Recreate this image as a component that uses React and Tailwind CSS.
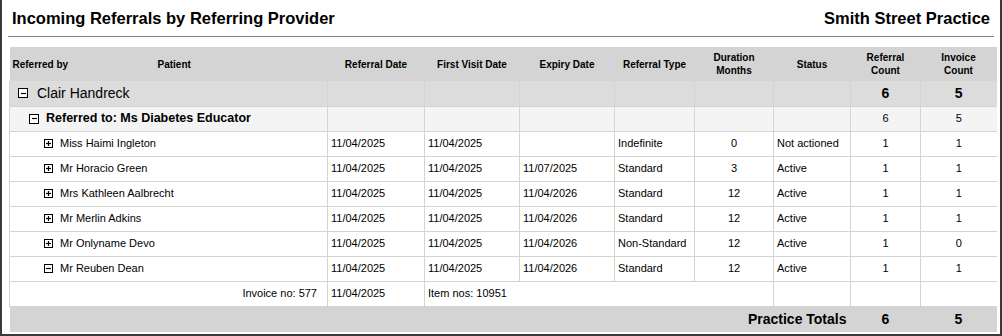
import React from "react";

const patients = [
  { name: "Miss Haimi Ingleton", ref: "11/04/2025", first: "11/04/2025", expiry: "", type: "Indefinite", dur: "0", status: "Not actioned", rc: "1", ic: "1" },
  { name: "Mr Horacio Green", ref: "11/04/2025", first: "11/04/2025", expiry: "11/07/2025", type: "Standard", dur: "3", status: "Active", rc: "1", ic: "1" },
  { name: "Mrs Kathleen Aalbrecht", ref: "11/04/2025", first: "11/04/2025", expiry: "11/04/2026", type: "Standard", dur: "12", status: "Active", rc: "1", ic: "1" },
  { name: "Mr Merlin Adkins", ref: "11/04/2025", first: "11/04/2025", expiry: "11/04/2026", type: "Standard", dur: "12", status: "Active", rc: "1", ic: "1" },
  { name: "Mr Onlyname Devo", ref: "11/04/2025", first: "11/04/2025", expiry: "11/04/2026", type: "Non-Standard", dur: "12", status: "Active", rc: "1", ic: "0" },
  { name: "Mr Reuben Dean", ref: "11/04/2025", first: "11/04/2025", expiry: "11/04/2026", type: "Standard", dur: "12", status: "Active", rc: "1", ic: "1", open: true },
];

const Toggle = ({ open, size = "w-[9px] h-[9px]" }) => (
  <span className={`inline-flex items-center justify-center ${size} border border-black bg-white shrink-0`}>
    <svg viewBox="0 0 7 7" className="w-[7px] h-[7px]">
      <path d="M1 3.5h5" stroke="black" strokeWidth="1.2" />
      {!open && <path d="M3.5 1v5" stroke="black" strokeWidth="1.2" />}
    </svg>
  </span>
);

const td = "border-l border-b border-[#d4d4d4] h-[25px] p-0 align-middle";

export default function App() {
  return (
    <div className="w-[1002px] h-[336px] bg-white border-x-2 border-b-2 border-[#3a3a3a] text-black" style={{ fontFamily: '"Liberation Sans", Arial, sans-serif' }}>
      <div className="flex items-center justify-between h-[36px] px-[10px] pt-[1px]">
        <h1 className="text-[16.5px] font-bold">Incoming Referrals by Referring Provider</h1>
        <h2 className="text-[16.5px] font-bold">Smith Street Practice</h2>
      </div>
      <div className="mx-[6px] border-t border-[#808080]" />
      <table className="mt-[10px] ml-[7px] w-[987px] table-fixed border-collapse text-[11px]">
        <colgroup>
          <col className="w-[318px]" />
          <col className="w-[97px]" />
          <col className="w-[95px]" />
          <col className="w-[95px]" />
          <col className="w-[80px]" />
          <col className="w-[79px]" />
          <col className="w-[77px]" />
          <col className="w-[70px]" />
          <col className="w-[76px]" />
        </colgroup>
        <thead>
          <tr className="bg-[#d4d4d4] h-[34px] text-[10px] font-bold leading-[13px]">
            <th className="p-0 font-bold text-left">
              <div className="flex">
                <span className="pl-[3px] w-[148px]">Referred by</span>
                <span>Patient</span>
              </div>
            </th>
            <th className="p-0 font-bold">Referral Date</th>
            <th className="p-0 font-bold">First Visit Date</th>
            <th className="p-0 font-bold">Expiry Date</th>
            <th className="p-0 font-bold">Referral Type</th>
            <th className="p-0 font-bold">Duration<br />Months</th>
            <th className="p-0 font-bold">Status</th>
            <th className="p-0 font-bold">Referral<br />Count</th>
            <th className="p-0 font-bold">Invoice<br />Count</th>
          </tr>
        </thead>
        <tbody>
          <tr className="bg-[#dcdcdc]">
            <td className={td}>
              <div className="flex items-center gap-[9px] pl-[8px] text-[14px]">
                <Toggle open size="w-[10px] h-[10px]" />
                <span>Clair Handreck</span>
              </div>
            </td>
            <td className={td}></td>
            <td className={td}></td>
            <td className={td}></td>
            <td className={td}></td>
            <td className={td}></td>
            <td className={td}></td>
            <td className={`${td} text-center text-[14px] font-bold`}>6</td>
            <td className={`${td} text-center text-[14px] font-bold`}>5</td>
          </tr>
          <tr className="bg-[#f4f4f4]">
            <td className={`${td} h-[24px]`}>
              <div className="flex items-center gap-[7px] pl-[19px] text-[12.5px] font-bold">
                <Toggle open size="w-[10px] h-[10px]" />
                <span>Referred to: Ms Diabetes Educator</span>
              </div>
            </td>
            <td className={td}></td>
            <td className={td}></td>
            <td className={td}></td>
            <td className={td}></td>
            <td className={td}></td>
            <td className={td}></td>
            <td className={`${td} text-center`}>6</td>
            <td className={`${td} text-center`}>5</td>
          </tr>
          {patients.map((p) => (
            <tr key={p.name}>
              <td className={td}>
                <div className="flex items-center gap-[7px] pl-[34px]">
                  <Toggle open={p.open} />
                  <span>{p.name}</span>
                </div>
              </td>
              <td className={`${td} pl-[3px]`}>{p.ref}</td>
              <td className={`${td} pl-[3px]`}>{p.first}</td>
              <td className={`${td} pl-[3px]`}>{p.expiry}</td>
              <td className={`${td} pl-[3px]`}>{p.type}</td>
              <td className={`${td} text-center`}>{p.dur}</td>
              <td className={`${td} pl-[3px]`}>{p.status}</td>
              <td className={`${td} text-center`}>{p.rc}</td>
              <td className={`${td} text-center`}>{p.ic}</td>
            </tr>
          ))}
          <tr>
            <td className={`${td} text-right pr-[10px]`}>Invoice no: 577</td>
            <td className={`${td} pl-[3px]`}>11/04/2025</td>
            <td className={`${td} pl-[3px]`} colSpan={4}>Item nos: 10951</td>
            <td className={td}></td>
            <td className={td}></td>
            <td className={td}></td>
          </tr>
          <tr className="bg-[#d4d4d4] h-[26px] text-[14px] font-bold">
            <td colSpan={7} className="p-0 text-right pr-[4px]">Practice Totals</td>
            <td className="p-0 text-center">6</td>
            <td className="p-0 text-center">5</td>
          </tr>
        </tbody>
      </table>
    </div>
  );
}
